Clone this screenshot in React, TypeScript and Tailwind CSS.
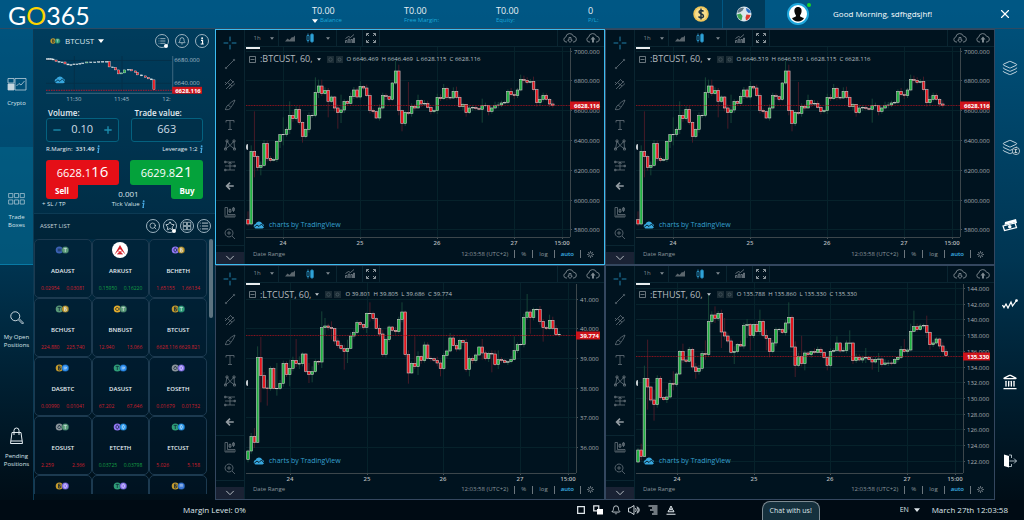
import React from "react";
import { X, Search, Star, Bell, Landmark, List, Layers } from "lucide-react";

type Series = {
  open: number;
  closes: number[];
  wicks: Record<number, [number | null, number | null]>;
  x0: number;
  shift: number;
};

const BTC: Series = {
  open: 575,
  x0: 3,
  shift: 19,
  closes: [
    588, 370, 386, 418, 412, 347, 391, 397, 394, 340, 320, 319, 304, 262, 272, 244, 283, 326, 304, 263, 262, 193, 174,
    197, 187, 220, 207, 240, 254, 246, 220, 226, 205, 186, 207, 175, 180, 203, 247, 251, 270, 240, 203, 206, 214, 165,
    129, 248, 286, 253, 256, 235, 240, 217, 228, 226, 238, 251, 248, 208, 212, 181, 208, 210, 190, 208, 236, 229, 254,
    240, 238, 241, 244, 233, 232, 250, 240, 232, 231, 225, 223, 190, 200, 203, 186, 154, 157, 163, 160, 185, 224, 214,
    202, 214, 228, 233,
  ],
  wicks: {
    0: [550, 594], 1: [352, 592], 2: [250, 448], 4: [400, 442], 10: [318, 360], 11: [268, 352], 13: [220, 318],
    16: [235, 290], 17: [280, 344], 21: [148, 268], 22: [155, 210], 23: [155, 204], 25: [180, 268], 28: [230, 302],
    29: [200, 285], 35: [160, 215], 46: [98, 170], 47: [110, 262], 48: [245, 310], 50: [162, 262], 53: [200, 240],
    61: [168, 215], 64: [178, 212], 65: [176, 214], 68: [230, 266], 73: [212, 284], 75: [232, 262], 85: [140, 190],
    81: [184, 228], 89: [146, 190], 90: [182, 236],
  },
};

const LTC: Series = {
  open: 590,
  x0: 3,
  shift: 20,
  closes: [
    564, 520, 538, 284, 338, 375, 377, 317, 376, 376, 361, 301, 335, 316, 292, 302, 302, 273, 325, 334, 326, 295, 297,
    194, 189, 194, 197, 234, 248, 257, 266, 256, 219, 209, 179, 185, 193, 151, 152, 167, 196, 213, 274, 230, 192, 202,
    206, 169, 147, 275, 330, 301, 311, 280, 293, 246, 286, 287, 292, 300, 317, 277, 264, 225, 248, 258, 233, 238, 319,
    287, 293, 276, 252, 270, 287, 272, 273, 305, 290, 293, 298, 296, 290, 263, 244, 244, 163, 147, 164, 139, 139, 175,
    194, 197, 172, 196, 215, 214,
  ],
  wicks: {
    0: [560, 598], 2: [495, 555], 3: [250, 540], 4: [222, 418], 6: [350, 428], 9: [300, 398], 13: [290, 370],
    15: [228, 312], 16: [280, 318], 19: [300, 360], 20: [310, 358], 23: [145, 315], 24: [165, 215], 26: [175, 230],
    30: [245, 320], 31: [230, 300], 38: [118, 176], 37: [148, 210], 42: [200, 282], 48: [118, 178], 50: [262, 362],
    51: [295, 332], 52: [220, 318], 53: [265, 336], 60: [290, 340], 63: [210, 268], 69: [280, 340], 73: [228, 290],
    76: [262, 328], 78: [262, 318], 83: [220, 292], 87: [93, 170], 88: [140, 212], 92: [168, 236], 94: [155, 200],
    97: [205, 222],
  },
};

const ETH: Series = {
  open: 597,
  x0: 3,
  shift: 20,
  closes: [
    561, 580, 346, 372, 411, 425, 346, 404, 410, 402, 361, 364, 333, 265, 291, 295, 259, 312, 325, 316, 272, 275, 176,
    156, 166, 151, 207, 219, 234, 268, 265, 244, 249, 188, 185, 218, 185, 206, 175, 217, 226, 266, 240, 200, 199, 209,
    180, 163, 252, 307, 280, 302, 270, 275, 266, 268, 259, 268, 284, 307, 265, 262, 240, 264, 263, 240, 240, 293, 283,
    291, 285, 283, 290, 297, 290, 288, 304, 300, 300, 301, 290, 283, 259, 265, 261, 205, 191, 200, 189, 187, 208, 245,
    240, 228, 249, 266, 278,
  ],
  wicks: {
    0: [555, 600], 1: [542, 592], 2: [308, 582], 3: [230, 440], 5: [380, 473], 9: [378, 420], 11: [325, 382],
    14: [242, 300], 18: [300, 347], 21: [232, 290], 22: [95, 280], 24: [130, 180], 26: [140, 255], 27: [165, 230],
    30: [250, 303], 34: [168, 225], 35: [180, 262], 38: [140, 215], 40: [200, 262], 41: [240, 283], 47: [118, 200],
    49: [235, 342], 51: [218, 310], 52: [262, 322], 59: [280, 322], 62: [220, 268], 66: [202, 260], 71: [255, 300],
    73: [282, 320], 75: [270, 327], 83: [228, 270], 85: [182, 265], 86: [143, 208], 90: [158, 225], 91: [205, 260],
  },
};

type ChartSpec = {
  name: string;
  ohlc: string;
  series: Series;
  axisX: number;
  ticks: [string, number][];
  days: [string, number][];
  price: string;
  priceY: number;
  active?: boolean;
};

const btcTicks: [string, number][] = [
  ["7000.000", 4], ["6800.000", 33], ["6600.000", 63], ["6400.000", 93], ["6200.000", 123], ["6000.000", 153],
  ["5800.000", 182],
];
const btcDays: [string, number][] = [["24", 38], ["25", 115], ["26", 192], ["27", 269], ["15:00", 317]];

const charts: ChartSpec[] = [
  {
    name: ":BTCUST, 60,", ohlc: "O 6646.469  H 6646.469  L 6628.115  C 6628.116", series: BTC, axisX: 325,
    ticks: btcTicks, days: btcDays, price: "6628.116", priceY: 58, active: true,
  },
  {
    name: ":BTCUST, 60,", ohlc: "O 6646.519  H 6646.519  L 6628.115  C 6628.116", series: BTC, axisX: 325,
    ticks: btcTicks, days: btcDays, price: "6628.116", priceY: 58,
  },
  {
    name: ":LTCUST, 60,", ohlc: "O 39.801  H 39.805  L 39.686  C 39.774", series: LTC, axisX: 331,
    ticks: [["41.000", 16], ["40.000", 45], ["39.000", 75], ["38.000", 105], ["37.000", 134], ["36.000", 164]],
    days: [["24", 45], ["25", 122], ["26", 198], ["27", 275], ["15:00", 323]],
    price: "39.774", priceY: 52,
  },
  {
    name: ":ETHUST, 60,", ohlc: "O 135.788  H 135.860  L 135.330  C 135.330", series: ETH, axisX: 328,
    ticks: [
      ["144.000", 5], ["142.000", 21], ["140.000", 36], ["138.000", 52], ["136.000", 68], ["134.000", 84],
      ["132.000", 99], ["130.000", 115], ["128.000", 131], ["126.000", 146], ["124.000", 162], ["122.000", 178],
    ],
    days: [["24", 42], ["25", 119], ["26", 195], ["27", 272], ["15:00", 320]],
    price: "135.330", priceY: 73,
  },
];

function Candles({ s }: { s: Series }) {
  const step = 77 / 24;
  return (
    <g>
      {s.closes.map((c, i) => {
        const o = i === 0 ? s.open : s.closes[i - 1];
        const x = s.x0 + i * step;
        const up = c <= o;
        const top = Math.min(o, c) / 3 - s.shift;
        const h = Math.max(Math.abs(o - c) / 3, 0.4);
        const w = s.wicks[i];
        const hi = (w && w[0] !== null ? w[0] : Math.min(o, c) - 3 - ((i * 7) % 9)) / 3 - s.shift;
        const lo = (w && w[1] !== null ? w[1] : Math.max(o, c) + 3 + ((i * 5) % 8)) / 3 - s.shift;
        return (
          <g key={i}>
            <line x1={x} x2={x} y1={hi} y2={lo} stroke={up ? "#17493a" : "#4e1c29"} strokeWidth="0.9" />
            <rect
              x={x - 1.3} y={top} width="2.6" height={h} fill={up ? "#1fb141" : "#e5131c"}
              stroke="#c9c6c6" strokeWidth="0.6"
            />
          </g>
        );
      })}
    </g>
  );
}

function PriceChart({ c }: { c: ChartSpec }) {
  return (
    <svg viewBox="0 0 359 199" className="block w-full font-['Open_Sans',sans-serif]" role="img" aria-label={c.name}>
      {c.ticks.map(([t, y]) => (
        <g key={t}>
          <line x1="1" x2={c.axisX} y1={y + 0.5} y2={y + 0.5} stroke="#06222b" />
          <line x1={c.axisX} x2={c.axisX + 2} y1={y + 0.5} y2={y + 0.5} stroke="#4a5358" />
          <text x={c.axisX + 4} y={y + 3} fontSize="6" fill="#a9b0b5">{t}</text>
        </g>
      ))}
      {c.days.map(([t, x]) => (
        <g key={t}>
          <line x1={x + 0.5} x2={x + 0.5} y1="0" y2="190" stroke="#06222b" />
          <line x1={x + 0.5} x2={x + 0.5} y1="190" y2="192" stroke="#4a5358" />
          <text x={x} y="198" fontSize="6" fontWeight="600" textAnchor="middle" fill="#b4babd">{t}</text>
        </g>
      ))}
      <line x1={c.axisX + 0.5} x2={c.axisX + 0.5} y1="1" y2="190" stroke="#3c464b" />
      <line x1="1" x2={c.axisX} y1="190.5" y2="190.5" stroke="#3c464b" />
      <Candles s={c.series} />
      <line x1="1" x2={c.axisX} y1={c.priceY + 0.5} y2={c.priceY + 0.5} stroke="#b3141f" strokeDasharray="1 0.6" opacity="0.75" />
      <rect x={c.axisX} y={c.priceY - 3.5} width={355 - c.axisX} height="8" fill="#cf141b" />
      <text x={c.axisX + 4} y={c.priceY + 2.5} fontSize="6" fontWeight="700" fill="#fff">{c.price}</text>
    </svg>
  );
}

function Caret({ className = "", small }: { className?: string; small?: boolean }) {
  return (
    <svg viewBox="0 0 8 5" className={(small ? "h-[3px] w-1 " : "h-1 w-1.5 ") + "shrink-0 " + className} aria-hidden="true">
      <path d="M0 0h8L4 5z" fill="currentColor" />
    </svg>
  );
}

function CloudLogo() {
  return (
    <svg viewBox="0 0 24 16" className="h-2 w-3 shrink-0" aria-hidden="true">
      <path d="M5 15a4.6 4.6 0 0 1 0-9A7.2 7.2 0 0 1 18.500 5.500 5 5 0 0 1 19 15z" fill="#37a6dd" />
      <path d="M2 13l6-5 4 3 5-5 5 6" fill="none" stroke="#00141f" strokeWidth="1.800" />
    </svg>
  );
}

const tools: { label: string; d: string; hot?: boolean }[] = [
  { label: "Cross", d: "M12 1v8M12 15v8M1 12h8M15 12h8", hot: true },
  { label: "Trend line", d: "M5 19L19 5M4 18.500a1.500 1.500 0 1 0 .1 3 1.500 1.500 0 0 0-.1-3zM20 2.500a1.500 1.500 0 1 0 .1 3 1.500 1.500 0 0 0-.1-3z" },
  { label: "Pitchfork", d: "M2 14L14 2M4 22L20 6M10 22L22 11M2 8l4 4M8 10l8 6M14 4l5 5" },
  { label: "Brush", d: "M2 21c3-1 2-7 6-9l6 5c-2 4-7 5-12 4zM9 12c3-4 8-8 13-10-2 6-5 11-8 14" },
  { label: "Text", d: "M4 7V3h16v4M12 3v18M8 21h8" },
  { label: "Patterns", d: "M3 20L6 4l6 9 8-9 1 16-9-7-9 7M4 2h4v4H4zM18 2h4v4h-4zM1 18h4v4H1zM19 18h4v4h-4z" },
  { label: "Forecast", d: "M2 4h20M2 12h20M2 20h20M12 4v16M9 8l3-4 3 4M1 2.500h3v3H1zM1 18.500h3v3H1zM20 10.500h3v3h-3z" },
  { label: "Back", d: "M21 12H5M12 4l-8 8 8 8" },
];

function ToolGlyph({ d, w = 1.6, className = "size-3" }: { d: string; w?: number; className?: string }) {
  return (
    <svg viewBox="0 0 24 24" className={className} fill="none" stroke="currentColor" strokeWidth={w} aria-hidden="true">
      <path d={d} />
    </svg>
  );
}

function CloudButton({ up }: { up?: boolean }) {
  return (
    <button aria-label={up ? "Save layout" : "Load layout"} className="flex text-[#7f8a91]">
      <svg viewBox="0 0 28 20" className="h-[10px] w-[14px]" fill="none" stroke="currentColor" strokeWidth="1.800">
        <path d="M8 18H6a5 5 0 0 1-.5-9.800A8 8 0 0 1 21 6.500 5.800 5.800 0 0 1 22 18h-2" />
        {up ? (
          <path d="M14 7l5 6h-3v6h-4v-6H9z" fill="currentColor" stroke="none" />
        ) : (
          <path d="M12 9h4v5h2.500L14 19l-4.500-5H12z" />
        )}
      </svg>
    </button>
  );
}

function ChartPanel({ c }: { c: ChartSpec }) {
  return (
    <section
      className={
        "flex min-w-0 border bg-[#00131f] text-[#7f8a91] " + (c.active ? "border-[#3cbcf0]" : "border-[#34475f]")
      }
    >
      <div className="flex w-[29px] shrink-0 flex-col border-r border-[#0a2531] text-[#65717a]">
        <div className="flex flex-1 flex-col pt-[3px] pb-[3px]">
          {tools.map((t) => (
            <button
              key={t.label}
              aria-label={t.label}
              className={"flex flex-1 items-center justify-center " + (t.hot ? "text-[#2389b5]" : t.label === "Back" ? "text-[#939ca2]" : "")}
            >
              <ToolGlyph
                d={t.d}
                w={t.label === "Back" ? 4 : 1.6}
                className={t.hot ? "size-3.5" : t.label === "Back" ? "size-2.5" : "size-3"}
              />
            </button>
          ))}
        </div>
        <div className="flex h-[46px] flex-col items-center justify-around border-y border-[#0a2531]">
          <button aria-label="Measure">
            <ToolGlyph d="M2 3h5v14h15v5H2zM6 18v4M10 18v4M14 18v4M18 18v4M12 5v9M10 7h4v5h-4zM19 2v10M17 4h4v5h-4z" />
          </button>
          <button aria-label="Zoom in">
            <ToolGlyph d="M10 2a8 8 0 1 0 .1 0zM16 16l6 6M10 6v8M6 10h8" />
          </button>
        </div>
        <button aria-label="More tools" className="mt-1.5 flex h-3 items-center justify-center bg-[#1a2234] text-[#b3bac0]">
          <ToolGlyph d="M3 7l9 9 9-9" w={2.4} className="size-2.5" />
        </button>
      </div>
      <div className="flex min-w-0 flex-1 flex-col">
        <div className="flex h-[17px] border-b border-[#0a2531] text-[6px] *:flex *:items-center *:border-[#0a2531]">
          <div className="w-[34px] justify-around border-r pl-1">
            <button>1h</button>
            <button aria-label="Choose interval"><Caret small /></button>
          </div>
          <div className="w-[58px] justify-around border-r">
            <button aria-label="Area chart">
              <svg viewBox="0 0 20 14" className="h-[7px] w-2.5"><path d="M0 13l5-6 4 3 5-6 2 1 4-4v12z" fill="#5b666d" /></svg>
            </button>
            <button aria-label="Candles">
              <svg viewBox="0 0 16 20" className="h-2.5 w-2" fill="none" stroke="#2fa3d8" strokeWidth="1.500">
                <path d="M4 1v4M4 15v4M2 5h4v10H2zM12 0v3M12 17v3" />
                <path d="M9.500 3h5v14h-5z" fill="#2fa3d8" />
              </svg>
            </button>
            <button aria-label="Choose chart style"><Caret small /></button>
          </div>
          <div className="w-[26px] justify-center border-r">
            <button aria-label="Indicators">
              <svg viewBox="0 0 20 18" className="h-[9px] w-2.5" fill="none" stroke="currentColor" strokeWidth="1.500">
                <path d="M1 18v-5h3v5M6.500 18v-8h3v8M12 18v-7h3v7M17 18V8h2v10M1 9l6-4 4 2 7-6" />
              </svg>
            </button>
          </div>
          <div className="w-[17px] justify-center border-r">
            <button aria-label="Full screen">
              <svg viewBox="0 0 20 20" className="size-2.5" fill="none" stroke="#8a949a" strokeWidth="2">
                <path d="M1 6V1h5M14 1h5v5M19 14v5h-5M6 19H1v-5M1 1l5 5M19 1l-5 5M19 19l-5-5M1 19l5-5" />
              </svg>
            </button>
          </div>
          <div className="flex-1" />
          <div className="w-[47px] justify-around border-l">
            <CloudButton />
            <CloudButton up />
          </div>
        </div>
        <div className="relative">
          <PriceChart c={c} />
          <div className="absolute top-0 left-px h-[2px] w-3.5 bg-[#e8ecee]" />
          <div className="absolute top-[97px] left-px h-1.5 w-0.5 rounded-l-full bg-[#c5ccd0]" />
          <div className="absolute top-1 left-1 flex h-4 items-center whitespace-pre">
            <svg viewBox="0 0 14 14" className="size-[7px]" fill="none" stroke="#8a949a" strokeWidth="1.500" aria-hidden="true">
              <path d="M1 1h12v12H1zM3 7h8" />
            </svg>
            <h2 className="ml-1 text-[9px] text-[#b4bbbf]">{c.name}</h2>
            <Caret small className="mx-1 text-[#c3cacf]" />
            <span className="ml-0.5 flex gap-0.5" aria-hidden="true">
              <svg viewBox="0 0 14 14" className="size-[7px]"><path d="M0 0h14v14H0z" fill="#1b2c35" /><circle cx="7" cy="7" r="3.500" fill="none" stroke="#45555d" strokeWidth="1.500" /></svg>
              <svg viewBox="0 0 14 14" className="size-[7px]"><path d="M0 0h14v14H0z" fill="#1b2c35" /><circle cx="7" cy="7" r="3" fill="none" stroke="#45555d" strokeWidth="2" /></svg>
            </span>
            <p className="ml-1 text-[6px] text-[#b9c0c4]">{c.ohlc}</p>
          </div>
          <a href="#tradingview" className="absolute bottom-4 left-2 flex items-center gap-1 text-[7px] leading-[10px] text-[#35a0d0]">
            <CloudLogo />
            charts by TradingView
          </a>
        </div>
        <div className="flex h-4 items-center gap-1.5 pr-2.5 pl-2 text-[6px] text-[#8b959b]">
          <button className="mr-auto">Date Range</button>
          <span>12:03:58 (UTC+2)</span>
          <i className="h-2 w-px bg-[#6b767d]" />
          <button>%</button>
          <i className="h-2 w-px bg-[#6b767d]" />
          <button>log</button>
          <i className="h-2 w-px bg-[#6b767d]" />
          <button className="font-semibold text-[#3db4e6]">auto</button>
          <i className="h-2 w-px bg-[#6b767d]" />
          <button aria-label="Chart settings">
            <svg viewBox="0 0 16 16" className="size-[7px]" fill="none" stroke="#98a1a7" strokeWidth="1.500">
              <circle cx="8" cy="8" r="4" />
              <path d="M8 0v3M8 13v3M0 8h3M13 8h3M2.500 2.500l2 2M11.500 11.500l2 2M13.500 2.500l-2 2M4.500 11.500l-2 2" />
            </svg>
          </button>
        </div>
      </div>
    </section>
  );
}

type Coin = "ada" | "t" | "tg" | "e" | "b" | "bnb" | "dash" | "eos" | "etc" | "neo";
const coinFill: Record<Coin, string> = {
  ada: "#3b62b5", t: "#2f9e78", tg: "#5a9a78", e: "#9277f5", b: "#c29a2d", bnb: "#e3ac2c", dash: "#2d8ef0",
  eos: "#8b949a", etc: "#2b9af0", neo: "#3c78d8",
};
const coinMark: Record<Coin, string> = {
  ada: "M-2-1h4M-2 1h4", t: "M-2-2h4M0-2v4.500", tg: "M-2-2h4M0-2v4.500", e: "M0-2.800l2 2.800-2 2.800-2-2.800z",
  b: "M-1-2.500h1.500q1.500 1.200 0 2.400H-1h2q1.500 1.300 0 2.600h-2z", bnb: "M0-2.500l2.500 2.500L0 2.500-2.500 0z",
  dash: "M-2-1h3.500l-.500 2h-3", eos: "M0-2.500l2 3L0 2.500-2 .5z", etc: "M0-2.800l1.500 2.800L0 2.800-1.500 0z", neo: "M-2 0h4M-2-1.500h4",
};

function CoinPair({ a, b, className = "h-2 w-[15px]" }: { a: Coin; b: Coin; className?: string }) {
  return (
    <svg viewBox="0 0 18 10" className={className} aria-hidden="true">
      <circle cx="5" cy="5" r="4.500" fill={coinFill[a]} />
      <path d={coinMark[a]} transform="translate(5 5)" fill="none" stroke="#0b2236" strokeWidth="0.900" />
      <circle cx="12.500" cy="5" r="4.500" fill={coinFill[b]} stroke="#00263c" strokeWidth="0.500" />
      <path d={coinMark[b]} transform="translate(12.500 5)" fill="none" stroke="#e5eef2" strokeWidth="0.800" />
    </svg>
  );
}

const assets: { name: string; pair: [Coin, Coin] | null; bid: string; ask: string; up?: boolean }[] = [
  { name: "ADAUST", pair: ["ada", "tg"], bid: "0.02954", ask: "0.03081" },
  { name: "ARKUST", pair: null, bid: "0.15950", ask: "0.16220", up: true },
  { name: "BCHETH", pair: ["e", "b"], bid: "1.65155", ask: "1.66134" },
  { name: "BCHUST", pair: ["tg", "b"], bid: "224.880", ask: "225.740" },
  { name: "BNBUST", pair: ["bnb", "tg"], bid: "12.940", ask: "13.066" },
  { name: "BTCUST", pair: ["b", "t"], bid: "6628.116", ask: "6629.821" },
  { name: "DASBTC", pair: ["b", "dash"], bid: "0.00990", ask: "0.01041" },
  { name: "DASUST", pair: ["t", "dash"], bid: "67.202", ask: "67.646" },
  { name: "EOSETH", pair: ["eos", "e"], bid: "0.01679", ask: "0.01732" },
  { name: "EOSUST", pair: ["eos", "tg"], bid: "2.259", ask: "2.366" },
  { name: "ETCETH", pair: ["e", "etc"], bid: "0.03725", ask: "0.03798", up: true },
  { name: "ETCUST", pair: ["t", "etc"], bid: "5.026", ask: "5.158" },
  { name: "", pair: ["b", "e"], bid: "", ask: "" },
  { name: "", pair: ["t", "e"], bid: "", ask: "" },
  { name: "", pair: ["b", "neo"], bid: "", ask: "" },
];

const mini: [number, number][] = [
  [46, 58.7], [48, 58.7], [50, 59], [52, 60], [55, 61.5], [58, 62], [61, 62], [64, 64], [67, 65], [70, 64.7], [73, 64],
  [76, 64], [79, 63.5], [82, 63], [86, 62], [90, 62], [94, 62], [98, 61.7], [102, 61.5], [106, 61.5], [108.5, 67],
  [112, 67.5], [115, 70], [118, 74], [121, 73], [124, 70], [128, 69.5], [131, 71], [135, 72.5], [137, 75],
  [141, 76], [145, 77.5], [148, 79], [151, 80], [153.5, 90],
];

function MiniChart() {
  return (
    <svg viewBox="0 0 166 48" className="block w-full font-['Open_Sans',sans-serif]" role="img" aria-label="BTCUST last hour">
      <g stroke="#04304a">
        <path d="M0 4.500h127M0 27.500h127M28.500 0v37M76.500 0v37" />
      </g>
      <path d="M127.500 0v37M0 37.500h127" stroke="#3d6880" />
      {mini.map(([x, y], i) => {
        const py = i === 0 ? y : mini[i - 1][1];
        const d = y - py;
        return (
          <rect
            key={i} x={x - 46} y={Math.min(y, py) - 56} width="2.200" height={Math.max(Math.abs(d), 0.7)}
            fill={d > 1.2 ? "#e5131c" : d < -0.8 ? "#1fb141" : "#e6eaec"} stroke="#e6eaec" strokeWidth="0.400"
          />
        );
      })}
      <path d="M0 34.500h127" stroke="#c0152a" strokeDasharray="1.500 1" />
      <g fontSize="6" fill="#a5bcc9">
        <text x="129" y="6">6680.000</text>
        <text x="129" y="29">6640.000</text>
        <text x="28" y="45" textAnchor="middle">11:30</text>
        <text x="76" y="45" textAnchor="middle">11:45</text>
        <text x="117" y="45">12:</text>
      </g>
      <rect x="127" y="31" width="30" height="7" fill="#cf141b" />
      <text x="130" y="37" fontSize="6" fontWeight="700" fill="#fff">6628.116</text>
      <g transform="translate(8 20) scale(0.500)">
        <path d="M5 15a4.600 4.600 0 0 1 0-9A7.200 7.200 0 0 1 18.500 5.500 5 5 0 0 1 19 15z" fill="#37a6dd" />
        <path d="M2 13l6-5 4 3 5-5 5 6" fill="none" stroke="#00304a" strokeWidth="1.800" />
      </g>
    </svg>
  );
}

function RoundButton({ label, children, badge }: { label: string; children: React.ReactNode; badge?: boolean }) {
  return (
    <button aria-label={label} className="relative flex size-[14px] items-center justify-center rounded-full border border-[#9db3c0] text-[#dbe5ea]">
      {children}
      {badge && <span className="absolute right-0 -bottom-px size-1 rounded-full bg-white" />}
    </button>
  );
}

function InfoMark() {
  return (
    <svg viewBox="0 0 6 12" className="inline-block h-2 w-1" aria-hidden="true">
      <path d="M2 5h2.200L3 11h1.500" fill="none" stroke="#45a7e0" strokeWidth="1.800" />
      <circle cx="4" cy="1.800" r="1.400" fill="#45a7e0" />
    </svg>
  );
}

function TradePanel() {
  return (
    <aside className="flex w-[182px] shrink-0 flex-col border-l border-[#0c3a54] bg-[#00101c]/30">
      <div className="flex h-[23px] items-center pr-1.5 pl-4">
        <button className="flex items-center gap-1 text-[8px] text-[#dbe6ec]">
          <CoinPair a="b" b="t" className="h-[6px] w-[11px]" />
          BTCUST
          <Caret className="text-white" />
        </button>
        <div className="ml-auto flex gap-1.5">
          <RoundButton label="Watch list" badge><List className="size-2" /></RoundButton>
          <RoundButton label="Alerts"><Bell className="size-2" /></RoundButton>
          <RoundButton label="Information">
            <svg viewBox="0 0 6 12" className="h-2 w-1"><path d="M1.500 5h2.300v5.500M1 10.500h4.500" fill="none" stroke="#fff" strokeWidth="1.800" /><circle cx="3.200" cy="1.800" r="1.400" fill="#fff" /></svg>
          </RoundButton>
        </div>
      </div>
      <div className="pt-1 pr-1 pl-3"><MiniChart /></div>
      <div className="grid grid-cols-2 gap-x-3 pt-[3px] pr-3 pl-3 text-[#e4edf2]">
        <label htmlFor="volume" className="pl-0.5 text-[8px] leading-[11px] font-semibold">Volume:</label>
        <label htmlFor="value" className="pl-1 text-[8px] leading-[11px] font-semibold">Trade value:</label>
        <div className="flex h-6 items-center rounded-[3px] border border-[#04617f] bg-[#00304a] px-1.5 text-[#1c8fb0]">
          <button aria-label="Decrease volume"><ToolGlyph d="M1 12h22" w={4} className="size-2" /></button>
          <input id="volume" defaultValue="0.10" className="w-full min-w-0 bg-transparent text-center text-[11px] text-[#cfdde5]" />
          <button aria-label="Increase volume"><ToolGlyph d="M1 12h22M12 1v22" w={4} className="size-2" /></button>
        </div>
        <div className="flex h-6 items-center rounded-[3px] border border-[#04617f] bg-[#00304a]">
          <input id="value" defaultValue="663" className="w-full min-w-0 bg-transparent text-center text-[11px] text-[#cfdde5]" />
        </div>
        <p className="pt-0.5 text-[6px] leading-[10px] whitespace-nowrap">R.Margin: <b className="font-semibold">&nbsp;331.49</b> <InfoMark /></p>
        <p className="pt-0.5 text-right text-[6px] leading-[10px] whitespace-nowrap">Leverage 1:2 <InfoMark /></p>
      </div>
      <div className="flex items-start justify-between pt-1.5 pr-3 pl-3 text-white">
        <button className="flex flex-col items-start">
          <span className="flex h-[25px] w-[73px] items-baseline justify-center rounded-[3px] rounded-bl-none bg-[#e50f17] text-[11px] leading-[22px]">
            6628.1<span className="text-[15px]">16</span>
          </span>
          <span className="h-[14px] w-8 rounded-b-[3px] bg-[#e50f17] text-center text-[8px] leading-[11px] font-bold">Sell</span>
        </button>
        <button className="flex flex-col items-end">
          <span className="flex h-[25px] w-[73px] items-baseline justify-center rounded-[3px] rounded-br-none bg-[#04a23b] text-[11px] leading-[22px]">
            6629.8<span className="text-[15px]">21</span>
          </span>
          <span className="h-[14px] w-8 rounded-b-[3px] bg-[#04a23b] text-center text-[8px] leading-[11px] font-bold">Buy</span>
        </button>
      </div>
      <div className="-mt-2.5 grid grid-cols-3 items-end pb-1 pl-2 text-[6px] leading-[10px] text-[#dbe6ec]">
        <button className="text-left">+ SL / TP</button>
        <p className="text-center whitespace-nowrap"><span className="block text-[8px]">0.001</span>Tick Value <InfoMark /></p>
      </div>
      <div className="flex h-[26px] items-center border-t border-[#0c3a54] bg-[#001420]/30 pr-1 pl-1.5">
        <h2 className="text-[6px] text-[#c5d3db]">ASSET LIST</h2>
        <div className="ml-auto flex gap-[3px]">
          <RoundButton label="Search"><Search className="size-2" /></RoundButton>
          <RoundButton label="Favourites" badge><Star className="size-2.5" /></RoundButton>
          <RoundButton label="Tile view"><ToolGlyph d="M3 3h8v8H3zM13 3h8v8h-8zM3 13h8v8H3zM13 13h8v8h-8z" className="size-2.5" /></RoundButton>
          <RoundButton label="List view"><List className="size-2.5" /></RoundButton>
        </div>
      </div>
      <div className="flex max-h-[255px] overflow-hidden">
        <div className="grid flex-1 auto-rows-[59px] grid-cols-3">
          {assets.map((a, i) => (
            <button key={i} aria-label={a.name || "Asset"} className="flex flex-col items-center rounded-[5px] border border-[#1c3a50] bg-[#001a2c]/40 pt-0.5">
              {a.pair ? (
                <span className="flex h-4 items-center"><CoinPair a={a.pair[0]} b={a.pair[1]} /></span>
              ) : (
                <svg viewBox="0 0 32 32" className="size-4" aria-hidden="true">
                  <circle cx="16" cy="16" r="16" fill="#fff" />
                  <path d="M16 6l11 19-11-11L5 25z" fill="#d5202a" />
                  <path d="M12.500 19.500h7M11 24h10l-5-4.500z" fill="#d5202a" stroke="#d5202a" strokeWidth="1.500" />
                </svg>
              )}
              <span className="mt-2 text-[6px] leading-[10px] font-semibold text-[#e4edf2]">{a.name}</span>
              <span className={"mt-2 flex w-full justify-between px-1.5 text-[5px] leading-[8px] " + (a.up ? "text-[#16a045]" : "text-[#d01f2d]")}>
                <span>{a.bid}</span>
                <span>{a.ask}</span>
              </span>
            </button>
          ))}
        </div>
        <div className="w-2 px-0.5"><div className="h-[79px] rounded-full bg-[#5d7380]" /></div>
      </div>
    </aside>
  );
}

function LeftRail() {
  const item = "flex flex-1 flex-col items-center justify-center gap-2 pt-3 text-center text-[6px] leading-[8px] text-[#d8e4ea]";
  return (
    <nav className="flex w-[33px] shrink-0 flex-col">
      <button className={item + " bg-[#005a85]/40"}>
        <svg viewBox="0 0 38 26" className="h-[13px] w-5" fill="none" stroke="#c5d6df" strokeWidth="1.500" aria-hidden="true">
          <path d="M1 1h12v9H1z" />
          <path d="M1 12h12v12H1z" fill="#c5d6df" />
          <path d="M15 1h22v23H15zM18 16l5-5 4 3 7-8" />
        </svg>
        <span className="pb-0.5">Crypto</span>
      </button>
      <button className={item + " border-b border-[#087aa5] bg-[#046a92]/60"}>
        <svg viewBox="0 0 36 26" className="h-3 w-[17px]" fill="none" stroke="#b5ccd8" strokeWidth="1.600" aria-hidden="true">
          <path d="M1 1h9v9H1zM13.500 1h9v9h-9zM26 1h9v9h-9zM1 15h9v9H1zM13.500 15h9v9h-9zM26 15h9v9h-9z" />
        </svg>
        <span>Trade<br />Boxes</span>
      </button>
      <button className={item}>
        <svg viewBox="0 0 28 28" className="size-3.5" fill="none" stroke="#dbe6ec" strokeWidth="1.800" aria-hidden="true">
          <circle cx="10.500" cy="10.500" r="9" />
          <path d="M17 18l8 8 2-2-8-8" />
        </svg>
        <span>My Open<br />Positions</span>
      </button>
      <button className={item + " pt-0"}>
        <svg viewBox="0 0 26 34" className="h-[17px] w-[13px]" fill="none" stroke="#e4edf2" strokeWidth="2" aria-hidden="true">
          <path d="M4 11h18l3 22H1zM1.500 28h23M8 16V7a5 5 0 0 1 10 0v9" />
        </svg>
        <span>Pending<br />Positions</span>
      </button>
    </nav>
  );
}

function RightRail() {
  const b = "flex flex-1 items-center justify-center text-[#dbe6ec]";
  return (
    <nav className="flex w-[29px] shrink-0 flex-col">
      <button aria-label="Layers" className={b}><Layers className="size-4" strokeWidth={1.3} /></button>
      <button aria-label="Fund layers" className={b}>
        <span className="relative"><Layers className="size-4" strokeWidth={1.3} />
          <svg viewBox="0 0 10 10" className="absolute -right-0.5 bottom-0 size-2" aria-hidden="true"><circle cx="5" cy="5" r="4.500" fill="#003a58" stroke="#fff" strokeWidth="0.800" /><path d="M6.500 3H3.500L5 5 3.500 7h3" fill="none" stroke="#fff" /></svg>
        </span>
      </button>
      <button aria-label="Money" className={b}>
        <svg viewBox="0 0 32 28" className="h-3.5 w-4" aria-hidden="true">
          <path d="M6 8L28 2l2 8-4 1-1-2-20 5z" fill="#fff" />
          <path d="M2 16l24-6 3 9-24 6z" fill="none" stroke="#fff" strokeWidth="2.500" />
          <circle cx="15.500" cy="17.500" r="3.500" fill="#fff" />
        </svg>
      </button>
      <button aria-label="Activity" className={b}>
        <svg viewBox="0 0 32 20" className="h-2.5 w-4" fill="none" stroke="#fff" strokeWidth="2.500" aria-hidden="true">
          <path d="M1 12l3 5 4-7 4 8 6-12 3 8 8-11" />
          <circle cx="29" cy="3" r="1.500" fill="#fff" />
        </svg>
      </button>
      <button aria-label="Bank" className={b}>
        <Landmark className="size-4 text-white" strokeWidth={2} />
      </button>
      <button aria-label="Log out" className={b}>
        <svg viewBox="0 0 30 28" className="h-3.5 w-4" aria-hidden="true">
          <path d="M3 1l10 3v23L3 24z" fill="#fff" />
          <path d="M13 2h5v6M18 20v5h-5M14 14h14M23 9l5 5-5 5" fill="none" stroke="#cfdde5" strokeWidth="1.600" />
        </svg>
      </button>
    </nav>
  );
}

const stats = [["T0.00", "Balance"], ["T0.00", "Free Margin:"], ["T0.00", "Equity:"], ["0", "P/L:"]];

function Header() {
  return (
    <header className="flex h-[29px] items-center border-b border-[#2c4a63] bg-[#005a88]/60">
      <a href="#home" className="mt-0.5 mr-auto flex pl-2 font-['Lato',sans-serif] text-[25px] leading-7 text-white">
        G<span className="text-[#ffd400]">O</span>365
      </a>
      <dl className="flex pt-0.5">
        {stats.map(([v, k]) => (
          <div key={k} className="flex w-[92px] flex-col-reverse">
            <dt className="flex items-center gap-0.5 text-[6px] leading-[9px] text-[#1ba6d6]">
              {k === "Balance" && <Caret className="text-white" />}
              {k}
            </dt>
            <dd className="text-[9px] leading-[11px] text-[#e8f1f5]">{v}</dd>
          </div>
        ))}
      </dl>
      <div className="flex h-full gap-px">
        <button aria-label="Deposit" className="flex w-[42px] items-center justify-center bg-[#003b5b]">
          <svg viewBox="0 0 32 32" className="size-4" aria-hidden="true">
            <circle cx="16" cy="16" r="15.500" fill="#f0c75a" />
            <circle cx="16" cy="16" r="12" fill="#f7dd8c" />
            <path d="M21 11c-2-3-9-3-9 1s9 3 9 8-8 4-10 1M16 5v22" fill="none" stroke="#1a3040" strokeWidth="2.800" />
          </svg>
        </button>
        <button aria-label="Region" className="flex w-[42px] items-center justify-center bg-[#003b5b]">
          <svg viewBox="0 0 32 32" className="size-4" aria-hidden="true">
            <circle cx="16" cy="16" r="15" fill="#dbe7ee" />
            <path d="M3 10C6 4 12 2 16 4l-3 5-4 3-6 2z" fill="#5f7786" />
            <path d="M2 17l7-2 4 5-2 9C6 27 3 23 2 17z" fill="#3aa655" />
            <path d="M20 4c5 1 9 5 10 9l-5 1-4-4z" fill="#2a71c9" />
            <path d="M21 17l8 1c-1 5-4 9-9 11l-1-6z" fill="#dd3b30" />
          </svg>
        </button>
      </div>
      <div className="flex w-[259px] items-center pr-3 pl-[22px]">
        <span className="relative">
          <svg viewBox="0 0 44 44" className="size-[22px]" aria-hidden="true">
            <circle cx="22" cy="22" r="20" fill="#fff" stroke="#1fa8dd" strokeWidth="4" />
            <path d="M22 8c6 0 8 5 7 10-.500 3-2 5-3 7 0 2 1 3 8 5-2 4-6 7-12 7s-10-3-12-7c7-2 8-3 8-5-1-2-2.500-4-3-7-1-5 1-10 7-10z" fill="#0a0a0a" />
          </svg>
          <span className="absolute top-0 -right-0.5 size-1 rounded-full bg-[#19d629]" />
        </span>
        <p className="ml-6 text-[8px] text-white">Good Morning, sdfhgdsjhf!</p>
        <button aria-label="Close" className="ml-auto text-white"><X className="size-3.5" strokeWidth={2} /></button>
      </div>
    </header>
  );
}

function Footer() {
  return (
    <footer className="flex h-5 items-stretch bg-[#000b14] pr-4 text-[8px] text-[#dfe7eb]">
      <p className="flex flex-1 items-center pl-[183px]">Margin Level: 0%</p>
      <div className="mr-[86px] flex w-[100px] items-center justify-between">
        <button aria-label="Single layout"><ToolGlyph d="M4 4h16v16H4z" w={3} className="size-2.5" /></button>
        <button aria-label="Windows">
          <svg viewBox="0 0 20 20" className="size-2.5"><path d="M1.500 1.500h10v10h-10z" fill="none" stroke="#e3e8ea" strokeWidth="2.500" /><path d="M8 8h12v11H8z" fill="#fff" /></svg>
        </button>
        <button aria-label="Notifications"><Bell className="size-2.5" /></button>
        <button aria-label="Sound">
          <svg viewBox="0 0 24 20" className="h-2.5 w-3" fill="none" stroke="currentColor" strokeWidth="1.800"><path d="M1 6v8h3l8 5V1L4 6zM15 6q3 4 0 8M18 3q5 7 0 14M21 5q3 5 0 10" /></svg>
        </button>
        <button aria-label="Align">
          <svg viewBox="0 0 20 20" className="size-2.5" stroke="currentColor" strokeWidth="2.200"><path d="M1 2h18M8 6h11M4 10h15M11 14h8M8 18h11" /></svg>
        </button>
        <button aria-label="Stack">
          <svg viewBox="0 0 20 20" className="size-2.5" fill="none" stroke="currentColor" strokeWidth="2"><path d="M10 2l3 6H7zM6 9.500h8l2 4H4zM1 18.500h18" /></svg>
        </button>
      </div>
      <button className="mt-px mr-20 w-[58px] rounded-t-lg border border-b-0 border-[#7d8b93] bg-[#15303d] text-[7px] whitespace-nowrap">
        Chat with us!
      </button>
      <label className="mr-3 flex items-center gap-0.5 text-[7px]">
        <select aria-label="Language" defaultValue="EN" className="w-3 appearance-none bg-transparent">
          <option>EN</option>
        </select>
        <Caret />
      </label>
      <p className="flex items-center text-[8px] whitespace-nowrap">March 27th 12:03:58</p>
    </footer>
  );
}

export default function App() {
  return (
    <div className="flex min-h-screen flex-col bg-linear-to-b from-[#00537e] via-[#003552] via-50% to-[#000a12] font-['Open_Sans',sans-serif]">
      <Header />
      <main className="flex flex-1">
        <LeftRail />
        <TradePanel />
        <div className="grid min-w-0 flex-1 grid-cols-2">
          {charts.map((c, i) => (
            <ChartPanel key={i} c={c} />
          ))}
        </div>
        <RightRail />
      </main>
      <Footer />
    </div>
  );
}
